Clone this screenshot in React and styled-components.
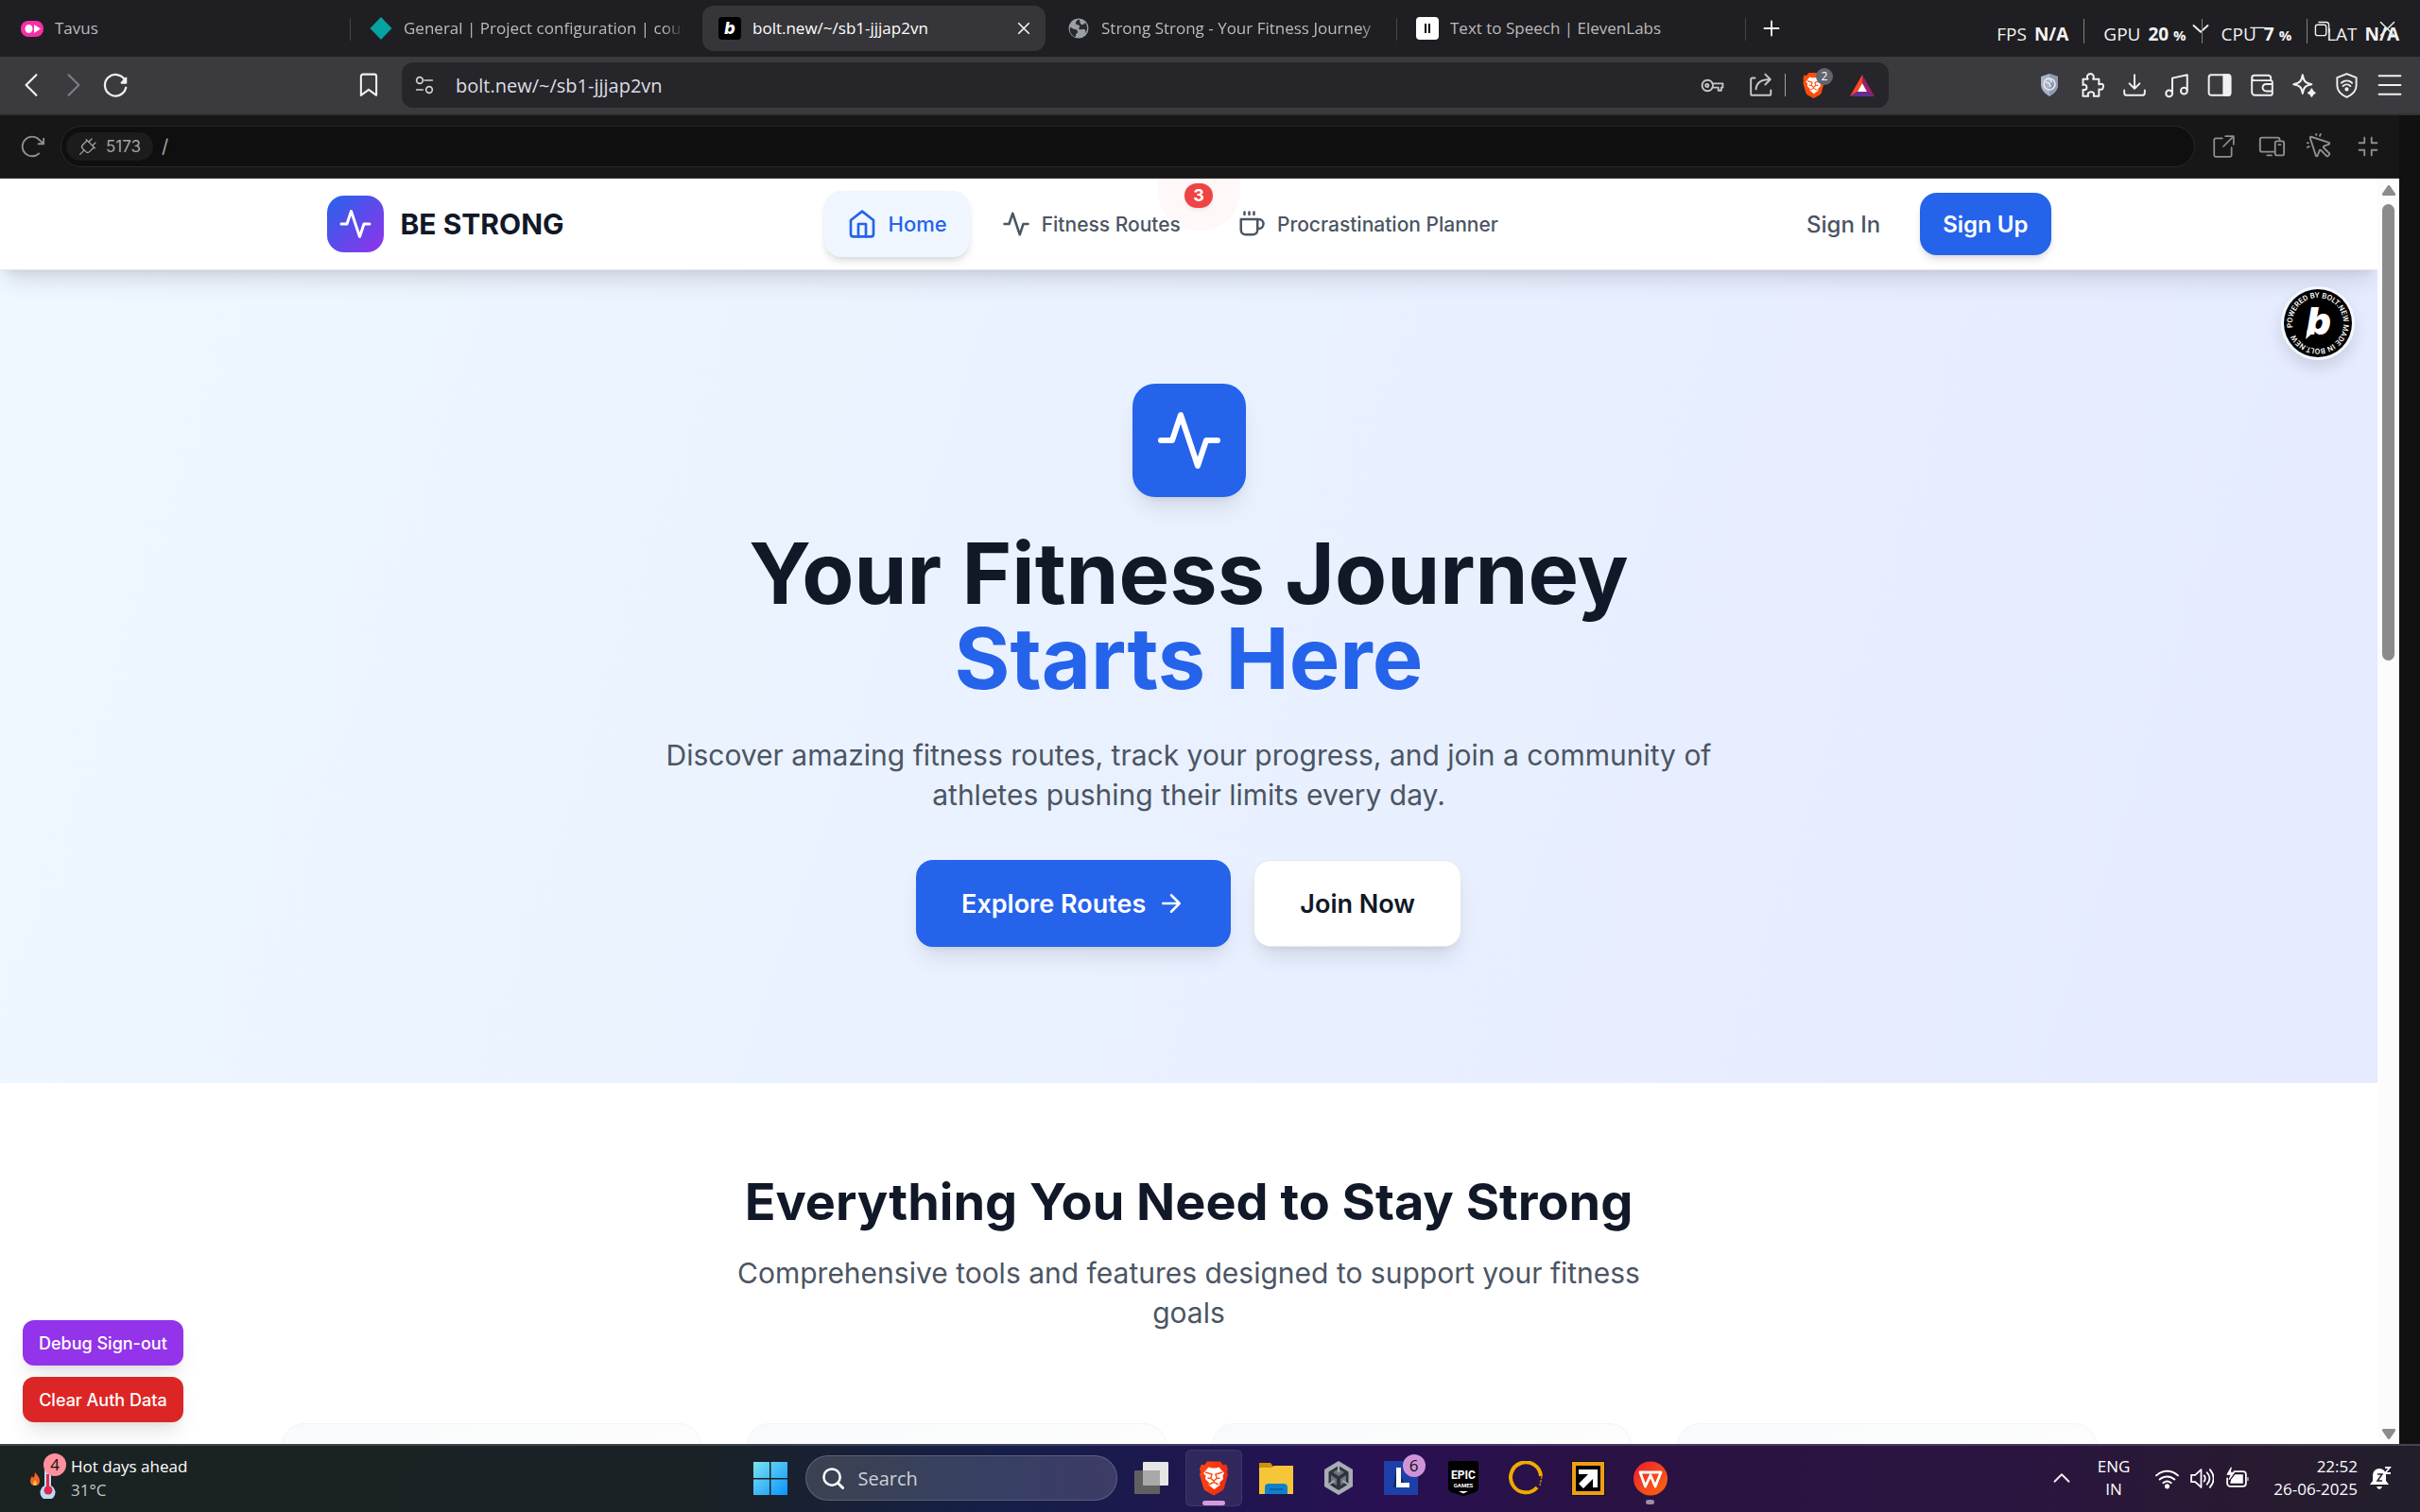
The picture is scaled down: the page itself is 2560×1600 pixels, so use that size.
import React from "react";
import styled, { createGlobalStyle } from "styled-components";
import {
  PiArrowClockwise,
  PiPlug,
  PiDevices,
  PiCursorClick,
  PiCornersIn,
} from "react-icons/pi";

const UI = `"Open Sans", "Noto Sans", sans-serif`;
const INTER = `Inter, "Liberation Sans", sans-serif`;

const Global = createGlobalStyle`
  *, *::before, *::after { box-sizing: border-box; }
  body { margin: 0; background: #111; overflow: hidden; }
  button, input { font: inherit; color: inherit; border: 0; background: none; padding: 0; margin: 0; outline: 0; }
  h1, h2, p { margin: 0; }
  a { color: inherit; text-decoration: none; }
  svg { display: block; flex: none; }
`;

/* ---------- window ---------- */

const Window = styled.div`
  display: flex;
  flex-direction: column;
  height: 100vh;
  font-family: ${UI};
  font-size: 17px;
`;

const TabStrip = styled.header`
  position: relative;
  display: flex;
  align-items: center;
  height: 60px;
  flex: none;
  padding-left: 2px;
  background: #1f1e22;
`;

const Tab = styled.div`
  position: relative;
  display: flex;
  align-items: center;
  gap: 12px;
  flex: 0 1 369px;
  min-width: 0;
  height: 48px;
  padding: 0 14px 0 20px;
  border-radius: 12px;
  color: ${(p) => (p.$active ? "#fff" : "#bbbbbd")};
  &::before {
    content: "";
    position: absolute;
    inset: 0 3px 0 3px;
    border-radius: 12px;
    background: ${(p) => (p.$active ? "#363539" : "transparent")};
  }
  &::after {
    content: "";
    position: absolute;
    right: 0;
    top: 13px;
    height: 24px;
    width: 1px;
    background: ${(p) => (p.$divider ? "#46454a" : "transparent")};
  }
  > * { position: relative; }
`;

const TabTitle = styled.span`
  flex: 1;
  min-width: 0;
  overflow: hidden;
  white-space: nowrap;
  line-height: 24px;
  ${(p) => p.$fade && "mask-image: linear-gradient(90deg, #000 92%, transparent 99%);"}
`;

const PlainButton = styled.button`
  display: grid;
  place-items: center;
  flex: none;
  width: ${(p) => p.$w || 45}px;
  height: ${(p) => p.$h || 45}px;
  color: ${(p) => p.$color || "#f0f0f2"};
`;

const WindowControls = styled.div`
  display: flex;
  margin-left: auto;
`;

const Monitor = styled.div`
  position: absolute;
  top: 20px;
  right: 22px;
  display: flex;
  align-items: center;
  height: 26px;
  font-size: 19px;
  color: #f3f3f3;
`;

const Metric = styled.span`
  display: flex;
  align-items: baseline;
  gap: 8px;
  padding: 4px 0 0 20px;
  margin-right: 16px;
  line-height: 24px;
  border-left: ${(p) => (p.$first ? "0" : "1px solid #808084")};
  height: 26px;
  &:last-child { margin-right: 0; }
  b small { font-size: 15px; }
`;

const Toolbar = styled.div`
  display: flex;
  align-items: center;
  height: 62px;
  flex: none;
  padding: 0 10px;
  background: #3b3a3f;
  border-bottom: 2px solid #313035;
`;

const Gap = styled.span`
  flex: 0 0 ${(p) => p.$w}px;
`;

const AddressBar = styled.div`
  display: flex;
  align-items: center;
  flex: 0 1 1573px;
  height: 48px;
  padding: 0 0 0 14px;
  border-radius: 12px;
  background: #26252a;
  color: #d4d4d8;
`;

const AddressInput = styled.input`
  flex: 1;
  min-width: 0;
  margin-left: 23px;
  font-size: 20px;
  color: #dedee2;
`;

const Divider = styled.i`
  width: 1px;
  height: 24px;
  margin: 0 7px 0 0;
  background: #a0a0a4;
`;

const ShieldButton = styled(PlainButton)`
  position: relative;
`;

const ShieldCount = styled.span`
  position: absolute;
  top: 4px;
  right: 2px;
  width: 18px;
  height: 18px;
  border-radius: 9px;
  background: #616570;
  color: #fff;
  font-size: 12px;
  line-height: 18px;
  text-align: center;
`;

const ToolbarIcons = styled.div`
  display: flex;
  margin-left: auto;
`;

/* ---------- preview bar ---------- */

const Workspace = styled.main`
  display: flex;
  flex-direction: column;
  flex: 1;
  min-height: 0;
  margin-right: 22px;
`;

const PreviewBar = styled.div`
  display: flex;
  align-items: center;
  height: 67px;
  flex: none;
  padding: 0 7px 0 10px;
  background: #171717;
  border-bottom: 1px solid #2b2b2b;
`;

const PathBox = styled.div`
  display: flex;
  align-items: center;
  flex: 1;
  height: 44px;
  margin: 0 5px 0 6px;
  padding: 0 6px 0 5px;
  border: 1px solid #292929;
  border-radius: 22px;
  background: #0f0f0f;
  color: #a3a3a3;
  font-family: ${INTER};
  font-size: 17px;
`;

const Port = styled.button`
  display: flex;
  align-items: center;
  gap: 9px;
  height: 30px;
  padding: 0 13px 0 12px;
  border-radius: 15px;
  background: #1c1c1c;
`;

const PathInput = styled.input`
  flex: 1;
  margin-left: 9px;
  font-size: 20px;
`;

/* ---------- site ---------- */

const Viewport = styled.div`
  display: flex;
  flex: 1;
  min-height: 0;
`;

const Site = styled.div`
  position: relative;
  flex: 1;
  min-width: 0;
  overflow: hidden;
  background: #fff;
  font-family: ${INTER};
  color: #4b5563;
`;

const SiteHeader = styled.header`
  position: relative;
  z-index: 2;
  background: #fff;
  border-bottom: 1px solid #e5e7eb;
  box-shadow: 0 15px 23px -5px rgba(0, 0, 0, 0.12), 0 6px 9px -6px rgba(0, 0, 0, 0.1);
`;

const HeaderInner = styled.div`
  display: flex;
  align-items: center;
  justify-content: space-between;
  max-width: 1920px;
  height: 96px;
  margin: 0 auto;
  padding: 0 48px;
`;

const Brand = styled.a`
  display: flex;
  align-items: center;
  gap: 18px;
  font-size: 30px;
  font-weight: 700;
  line-height: 42px;
  color: #111827;
`;

const BrandMark = styled.span`
  display: grid;
  place-items: center;
  width: 60px;
  height: 60px;
  border-radius: 18px;
  background: linear-gradient(135deg, #2563eb, #9333ea);
  color: #fff;
`;

const Nav = styled.nav`
  display: flex;
  align-items: center;
  gap: 12px;
`;

const NavLink = styled.a`
  position: relative;
  display: flex;
  align-items: center;
  gap: 12px;
  height: ${(p) => (p.$active ? 70 : 66)}px;
  padding: 0 24px;
  margin: ${(p) => (p.$active ? "0 -2px 0 -3px" : "0")};
  border-radius: 18px;
  font-size: ${(p) => (p.$active ? 22 : 21)}px;
  font-weight: 500;
  color: ${(p) => (p.$active ? "#2563eb" : "#4b5563")};
  background: ${(p) => (p.$active ? "#eff6ff" : "transparent")};
  box-shadow: ${(p) =>
    p.$active ? "0 6px 9px -1px rgba(0,0,0,.1), 0 3px 6px -3px rgba(0,0,0,.1)" : "none"};
`;

const Count = styled.span`
  position: absolute;
  top: -10px;
  right: -10px;
  width: 30px;
  height: 26px;
  border-radius: 13px;
  background: #ef4444;
  color: #fff;
  font-size: 18px;
  font-weight: 700;
  line-height: 26px;
  text-align: center;
  box-shadow: 0 2px 4px rgba(0, 0, 0, 0.08);
`;

const Ping = styled.span`
  position: absolute;
  top: -15px;
  right: -39px;
  width: 87px;
  height: 55px;
  border-radius: 0 0 44px 44px / 0 0 40px 40px;
  background: rgba(239, 68, 68, 0.04);
`;

const Account = styled.div`
  display: flex;
  align-items: center;
  gap: 18px;
`;

const AccountButton = styled.button`
  height: 66px;
  padding: 0 24px;
  border-radius: 18px;
  font-size: 24px;
  font-weight: ${(p) => (p.$primary ? 600 : 500)};
  color: ${(p) => (p.$primary ? "#fff" : "#4b5563")};
  background: ${(p) => (p.$primary ? "#2563eb" : "transparent")};
  box-shadow: ${(p) =>
    p.$primary ? "0 6px 9px -1px rgba(0,0,0,.1), 0 3px 6px -3px rgba(0,0,0,.1)" : "none"};
`;

const Hero = styled.section`
  display: flex;
  flex-direction: column;
  align-items: center;
  padding: 120px 48px 144px;
  background: linear-gradient(108deg, #eff7ff, #ebf3ff 30%, #e8efff 62%, #e5eaff);
  text-align: center;
`;

const HeroMark = styled.span`
  display: grid;
  place-items: center;
  width: 120px;
  height: 120px;
  border-radius: 24px;
  background: #2563eb;
  color: #fff;
  box-shadow: 0 15px 23px -5px rgba(0, 0, 0, 0.1), 0 6px 9px -6px rgba(0, 0, 0, 0.1);
`;

const HeroTitle = styled.h1`
  margin-top: 36px;
  font-size: 90px;
  line-height: 90px;
  font-weight: 700;
  color: #111827;
  span { display: block; color: #2563eb; }
`;

const Lead = styled.p`
  max-width: ${(p) => p.$max}px;
  margin: ${(p) => p.$top}px auto 0;
  font-size: 30px;
  line-height: 42px;
`;

const Actions = styled.div`
  display: flex;
  gap: 24px;
  margin-top: 48px;
`;

const Action = styled.button`
  display: flex;
  align-items: center;
  gap: 12px;
  height: 92px;
  padding: 0 48px;
  border: ${(p) => (p.$primary ? "0" : "1px solid #e5e7eb")};
  border-radius: 18px;
  font-size: 27px;
  font-weight: 600;
  color: ${(p) => (p.$primary ? "#fff" : "#111827")};
  background: ${(p) => (p.$primary ? "#2563eb" : "#fff")};
  box-shadow: 0 15px 23px -5px rgba(0, 0, 0, 0.1), 0 6px 9px -6px rgba(0, 0, 0, 0.1);
`;

const Features = styled.section`
  max-width: 1920px;
  margin: 0 auto;
  padding-top: 96px;
  text-align: center;
`;

const FeaturesTitle = styled.h2`
  font-size: 54px;
  line-height: 60px;
  font-weight: 700;
  color: #111827;
`;

const Cards = styled.div`
  display: grid;
  grid-template-columns: repeat(4, 1fr);
  gap: 48px;
  margin-top: 96px;
`;

const Card = styled.article`
  height: 360px;
  border: 1px solid #f3f4f6;
  border-radius: 24px;
  background: linear-gradient(to bottom right, #f9fafb, #fff);
  box-shadow: 0 2px 4px rgba(0, 0, 0, 0.04);
`;

const DebugStack = styled.div`
  position: absolute;
  left: 24px;
  bottom: 23px;
  display: flex;
  flex-direction: column;
  gap: 12px;
`;

const DebugButton = styled.button`
  height: 48px;
  padding: 0 17px;
  border-radius: 12px;
  font-size: 18px;
  font-weight: 500;
  color: #fff;
  background: ${(p) => p.$color};
  box-shadow: 0 15px 23px -5px rgba(0, 0, 0, 0.1), 0 6px 9px -6px rgba(0, 0, 0, 0.1);
`;

const BoltBadge = styled.a`
  position: absolute;
  z-index: 3;
  top: 114px;
  right: 24px;
  border: 3px solid #f4f8ff;
  border-radius: 50%;
  box-shadow: 0 8px 16px rgba(0, 0, 0, 0.12);
`;

const ScrollTrack = styled.div`
  display: flex;
  flex-direction: column;
  align-items: center;
  width: 23px;
  padding: 7px 0 5px;
  background: #fcfcfc;
`;

const ScrollThumb = styled.div`
  width: 13px;
  height: 36.4%;
  margin: 9px 0 auto;
  border-radius: 7px;
  background: #8b8b8b;
`;

/* ---------- taskbar ---------- */

const Taskbar = styled.footer`
  display: grid;
  grid-template-columns: 1fr auto 1fr;
  align-items: center;
  flex: none;
  height: 72px;
  padding-bottom: 2px;
  border-top: 2px solid rgba(255, 255, 255, 0.16);
  background: linear-gradient(90deg, #1b2222 0%, #1a2226 29%, #151f48 41%, #1f1650 50%, #281052 57%, #2a1242 68%, #2a153f 84%, #281a31 93%, #221f2b 100%) border-box;
  color: #fff;
`;

const Weather = styled.button`
  display: flex;
  align-items: center;
  gap: 5px;
  margin-left: 31px;
  text-align: left;
  line-height: 25px;
  small { display: block; font-size: 17px; color: #c4c7c7; }
`;

const WeatherArt = styled.span`
  position: relative;
  width: 39px;
  height: 44px;
`;

const Bubble = styled.span`
  position: absolute;
  top: ${(p) => p.$top}px;
  right: ${(p) => p.$right}px;
  width: 24px;
  height: 24px;
  border-radius: 12px;
  background: ${(p) => p.$color};
  color: #111;
  font-size: 17px;
  line-height: 24px;
  text-align: center;
`;

const Dock = styled.div`
  display: flex;
  align-items: center;
`;

const SearchBox = styled.label`
  display: flex;
  align-items: center;
  gap: 15px;
  width: 330px;
  height: 48px;
  margin: 0 3px 0 4px;
  padding: 0 17px;
  border: 1px solid rgba(255, 255, 255, 0.18);
  border-radius: 24px;
  background: rgba(255, 255, 255, 0.15);
  input { width: 220px; font-size: 20px; }
  input::placeholder { color: #cfd0d4; opacity: 1; }
`;

const DockButton = styled.button`
  position: relative;
  display: grid;
  place-items: center;
  width: 60px;
  height: 60px;
  margin: 0 3px;
  border-radius: 6px;
  border: 1px solid ${(p) => (p.$active ? "rgba(255,255,255,.08)" : "transparent")};
  background: ${(p) => (p.$active ? "rgba(255,255,255,.08)" : "transparent")};
  &::after {
    content: "";
    position: absolute;
    bottom: ${(p) => (p.$active ? 0 : 1)}px;
    width: ${(p) => (p.$active ? 24 : p.$open ? 9 : 0)}px;
    height: 5px;
    border-radius: 3px;
    background: ${(p) => (p.$active ? "#d79bdc" : "#9d8fab")};
  }
`;

const Tray = styled.div`
  display: flex;
  align-items: center;
  justify-content: flex-end;
  padding-right: 30px;
  line-height: 24px;
`;

const TrayText = styled.div`
  margin-right: ${(p) => p.$right}px;
  text-align: ${(p) => p.$align};
`;

const TrayIcons = styled.div`
  display: flex;
  gap: 12px;
  margin-right: 26px;
`;

/* ---------- drawings ---------- */

const Line = ({ size = 24, w = 2, box = 24, children }) => (
  <svg width={size} height={size} viewBox={`0 0 ${box} ${box}`} fill="none" stroke="currentColor" strokeWidth={w} strokeLinecap="round" strokeLinejoin="round" aria-hidden="true">
    {children}
  </svg>
);

const Pulse = ({ size }) => (
  <Line size={size}><polyline points="22 12 18 12 15 21 9 3 6 12 2 12" /></Line>
);

const BoltMark = ({ size }) => (
  <svg width={size} height={size} viewBox="0 0 24 24" aria-hidden="true">
    <rect width="24" height="24" rx="4" fill="#000" />
    <text x="12" y="18" textAnchor="middle" fontFamily="Inter" fontWeight="800" fontStyle="italic" fontSize="18" fill="#fff">b</text>
  </svg>
);

const BraveLion = ({ w, h, from, to, id }) => (
  <svg width={w} height={h} viewBox="0 0 30 36" aria-hidden="true">
    <defs>
      <linearGradient id={id} x1="0" x2="1" y1="0" y2="0.3">
        <stop offset="0" stopColor={from} />
        <stop offset="1" stopColor={to} />
      </linearGradient>
    </defs>
    <path d="M8 0h14l3 4 3-1 2 5-1 3 1 3-4 14q-.6 2-3 3.600L15 36l-8-4.400Q4.600 30 4 28L0 14l1-3-1-3 2-5 3 1z" fill={`url(#${id})`} />
    <path d="M9.500 6l3 1h5l3-1 5.500 6.500-1.500 2.500.5 3.500-4 4 .5 2.500-6 4.500-6-4.500.5-2.500-4-4 .5-3.500L4 12.500z" fill="#fff" />
    <path d="M6 11.500l7 2-1.200 4.500 3.200 2.500 3.200-2.500-1.200-4.500 7-2M10 24.500l5-2.700 5 2.700M8.500 17.500l2.500.6M21.500 17.500l-2.500.6M15 20v2" fill="none" stroke={from} strokeWidth="1.500" />
  </svg>
);

const Globe = () => (
  <svg width="24" height="24" viewBox="0 0 24 24" aria-hidden="true">
    <circle cx="12" cy="12" r="10.500" fill="#9aa0a6" />
    <path d="M3 11c2 0 3 2 5 2s3 1 3 3-2 1-2 3 0 2-1 2C4 19 2 15 3 11zM12 2.500C9 4 8 7 10 8s3 0 3 2-2 2 0 3 5-1 6 1-1 4-1 4c4-3 4-9 1-12-1 2-4 3-5 1s0-3-2-4.500z" fill="#2a2a2e" />
  </svg>
);

const Badge = () => (
  <svg width="72" height="72" viewBox="0 0 72 72" role="img" aria-label="Made in Bolt">
    <defs>
      <path id="ring" d="M36 36m-27 0a27 27 0 1 1 54 0a27 27 0 1 1-54 0" />
    </defs>
    <circle cx="36" cy="36" r="36" fill="#000" />
    <g transform="rotate(-10 36 36)">
      <text fontFamily="Roboto" fontWeight="500" fontSize="8" fill="#fff">
        <textPath href="#ring">POWERED BY BOLT.NEW MADE IN BOLT.NEW</textPath>
      </text>
    </g>
    <text x="37" y="48" textAnchor="middle" fontFamily="Inter" fontWeight="900" fontStyle="italic" fontSize="40" fill="#fff">b</text>
    <path d="M25 42l6 4-8 7z" fill="#fff" />
  </svg>
);

const toolbarIcons = [
  ["VPN shield", <svg key="a" width="24" height="26" viewBox="0 0 24 26"><path d="M12 1l9 3v8c0 6-4 10-9 13-5-3-9-7-9-13V4z" fill="#aab3c5" /><path d="M12 1l9 3v8c0 6-4 10-9 13z" fill="#8f9ab0" /><circle cx="12" cy="12" r="6" fill="none" stroke="#e8ecf4" strokeWidth="1.500" /><path d="M8 10l4 1 1 4M12 7l3 3" stroke="#e8ecf4" strokeWidth="1.500" fill="none" /></svg>],
  ["Extensions", <Line key="b" size={27} w={1.8}><path d="M4 6h4.500C7 2.500 9 1 11 1s4 1.500 2.500 5H19v5c3-1.500 4.500 0 4 2.500S21 16 19 15.500V22h-5c1-3-.5-4-2.500-4S8 19.500 9 22H4v-6c3 .5 3.500-1 3.500-2.500S6 10.500 4 11.500z" /></Line>],
  ["Downloads", <Line key="c" size={26} w={1.8}><path d="M12 2v13M7 10.500l5 5 5-5M2 17v2.500A2.500 2.500 0 0 0 4.500 22h15a2.500 2.500 0 0 0 2.500-2.500V17" /></Line>],
  ["Playlist", <Line key="d" size={27} w={1.8}><path d="M8 19V5l14-3v14" /><circle cx="5" cy="19.500" r="3" /><circle cx="19" cy="17" r="3" /></Line>],
  ["Sidebar", <Line key="e" size={26} w={1.8}><rect x="1.500" y="2" width="21" height="20" rx="2.500" /><path d="M16 2h4.500a2 2 0 0 1 2 2v16a2 2 0 0 1-2 2H16z" fill="currentColor" /></Line>],
  ["Wallet", <Line key="f" size={26} w={1.8}><path d="M20.500 7V5a2.500 2.500 0 0 0-2.500-2.500H4.500a2.500 2.500 0 0 0 0 5H20a2 2 0 0 1 2 2V20a2 2 0 0 1-2 2H5a3 3 0 0 1-3-3V5M22 11h-6a3.500 3.500 0 0 0 0 7h6" /></Line>],
  ["Assistant", <Line key="g" size={27} w={1.8}><path d="M10.500 2c1 6 2.500 7.500 8.500 8.800-6 1.200-7.500 2.700-8.500 8.700-1-6-2.500-7.500-8.500-8.700C8 9.500 9.500 8 10.500 2z" /><path d="M19 15.500c.5 2.500 1 3 3 3.500-2 .5-2.500 1-3 3-.5-2-1-2.500-3-3 2-.5 2.500-1 3-3.500z" fill="currentColor" /></Line>],
  ["VPN", <Line key="h" size={27} w={1.700}><path d="M12 1l9 3.500V12c0 5-3.500 8.500-9 11-5.500-2.500-9-6-9-11V4.500z" /><path d="M7 9.500c3-2.500 7-2.500 10 0M8.500 12.500c2-2 5-2 7 0" /><circle cx="12" cy="15.500" r="1" fill="currentColor" /></Line>],
  ["Menu", <Line key="i" size={26} w={1.900}><path d="M1.500 3h21M1.500 12h21M1.500 21h21" /></Line>],
];

const dockIcons = [
  { name: "Task View", art: <svg width="36" height="36" viewBox="0 0 36 36"><rect y="10" width="27" height="25" rx="1" fill="#606060" /><rect x="9" y="1" width="27" height="25" rx="1" fill="#e6e6e6" /><path d="M9 10h18v16H9z" fill="#a9a9a9" /></svg> },
  { name: "Brave", active: true, art: <BraveLion id="lionDock" w={30} h={37} from="#ff4a12" to="#f02a10" /> },
  { name: "File Explorer", art: <svg width="36" height="36" viewBox="0 0 36 36"><path d="M0 2h12l3 4v6H0z" fill="#d18f0a" /><path d="M0 7h13l3-2h20v30H0z" fill="#f6c638" /><path d="M6 35v-7q0-4 4-4h16q4 0 4 4v7z" fill="#1180cc" /><path d="M11 30h14" stroke="#0a5a9c" strokeWidth="1.500" /></svg> },
  { name: "Unity Hub", art: <svg width="32" height="36" viewBox="0 0 32 36"><path d="M16 0l15 9v18l-15 9-15-9V9z" fill="#a7acb5" /><path d="M16 5l10.500 6.500v13L16 31 5.500 24.500v-13z" fill="#2f343c" /><path d="M16 8l6 4-6 4-6-4zM8 15l6 4v7l-6-4zM24 15l-6 4v7l6-4z" fill="#6f757f" /><path d="M16 5v7M5.500 25l6-4M26.500 25l-6-4" stroke="#a7acb5" strokeWidth="2" /></svg> },
  { name: "L app", count: "6", art: <svg width="36" height="36" viewBox="0 0 36 36"><path d="M0 0h36v36H0z" fill="#1d3fa8" /><path d="M13 8l-3 20 14-1z" fill="#0c2a5c" /><path d="M13 7h5v16h9v5H13z" fill="#fff" /></svg> },
  { name: "Epic Games", art: <svg width="32" height="37" viewBox="0 0 32 37"><path d="M2 0h28q2 0 2 2v28l-3 3-13 4-13-4-3-3V2q0-2 2-2z" fill="#000" /><text x="16" y="19" textAnchor="middle" fontFamily="Roboto" fontWeight="700" fontSize="12" fill="#fff">EPIC</text><text x="16" y="28" textAnchor="middle" fontFamily="Roboto" fontWeight="700" fontSize="6" fill="#fff">GAMES</text><path d="M11 32h10l-5 2.500z" fill="#fff" /></svg> },
  { name: "Ring app", art: <svg width="36" height="36" viewBox="0 0 36 36"><path d="M34 16A16 16 0 1 0 30 28" fill="none" stroke="#f0aa00" strokeWidth="4" /><path d="M35 16l-2 10" stroke="#b87f00" strokeWidth="1.500" strokeDasharray="3 1" /></svg> },
  { name: "Arrow app", art: <svg width="36" height="37" viewBox="0 0 36 37"><path d="M0 0h36v37H0z" fill="#111" /><path d="M3 3h30v31H3z" fill="#000" stroke="#f09c1a" strokeWidth="4" /><path d="M8 9h20v19h-5v-9L13 29l-5-5 10-10H8z" fill="#fff" /></svg> },
  { name: "WPS Office", open: true, art: <svg width="36" height="37" viewBox="0 0 36 37"><defs><linearGradient id="wps" x2="1" y2="1"><stop stopColor="#ea1c2c" /><stop offset="1" stopColor="#fb6b10" /></linearGradient></defs><circle cx="18" cy="18.500" r="18" fill="url(#wps)" /><path d="M17 12H7l5.500 15L18 15l5 12 6-15H19" fill="none" stroke="#fff" strokeWidth="2.800" strokeLinejoin="round" strokeLinecap="round" /></svg> },
];

export default function App() {
  return (
    <Window>
      <Global />
      <TabStrip>
        <Tab $divider>
          <svg width="24" height="24" viewBox="0 0 24 24"><rect y="4" width="24" height="17" rx="8" fill="#f72fa8" /><ellipse cx="8.500" cy="12.500" rx="4" ry="4.500" fill="#fff" /><path d="M14 8l7 4.500-7 4.500z" fill="#fff" /></svg>
          <TabTitle>Tavus</TabTitle>
        </Tab>
        <Tab>
          <svg width="24" height="24" viewBox="0 0 24 24"><path d="M12 0l11.500 12L12 24 .5 12z" fill="#05a3a0" /></svg>
          <TabTitle $fade>General | Project configuration | cour</TabTitle>
        </Tab>
        <Tab $active>
          <BoltMark size={24} />
          <TabTitle>bolt.new/~/sb1-jjjap2vn</TabTitle>
          <PlainButton $w={24} $h={24} aria-label="Close tab"><Line size={14}><path d="M3 3l18 18M21 3L3 21" strokeWidth="3" /></Line></PlainButton>
        </Tab>
        <Tab $divider>
          <Globe />
          <TabTitle $fade>Strong Strong - Your Fitness Journey</TabTitle>
        </Tab>
        <Tab $divider>
          <svg width="24" height="24" viewBox="0 0 24 24"><rect width="24" height="24" rx="4" fill="#fff" /><path d="M9 7h2v10H9zM13 7h2v10h-2z" fill="#000" /></svg>
          <TabTitle>Text to Speech | ElevenLabs</TabTitle>
        </Tab>
        <PlainButton $w={54} aria-label="New tab"><Line size={18}><path d="M12 2v20M2 12h20" strokeWidth="2.500" /></Line></PlainButton>
        <WindowControls>
          <PlainButton $w={50} aria-label="Search tabs"><Line size={18}><path d="M2 8l10 9L22 8" strokeWidth="2.500" /></Line></PlainButton>
          <PlainButton $w={69} aria-label="Minimize"><Line size={16}><path d="M1 11h22" /></Line></PlainButton>
          <PlainButton $w={69} aria-label="Restore"><Line size={17}><rect x="2" y="6" width="16" height="16" rx="3" /><path d="M7 2h11a4 4 0 0 1 4 4v11" /></Line></PlainButton>
          <PlainButton $w={69} aria-label="Close"><Line size={17}><path d="M2 2l20 20M22 2L2 22" /></Line></PlainButton>
        </WindowControls>
        <Monitor>
          <Metric $first>FPS <b>N/A</b></Metric>
          <Metric>GPU <b>20 <small>%</small></b></Metric>
          <Metric>CPU <b>7 <small>%</small></b></Metric>
          <Metric>LAT <b>N/A</b></Metric>
        </Monitor>
      </TabStrip>

      <Toolbar>
        <PlainButton aria-label="Back"><Line size={26}><path d="M17 2L7 12l10 10" /></Line></PlainButton>
        <PlainButton $color="#7d7d82" aria-label="Forward"><Line size={26}><path d="M7 2l10 10L7 22" /></Line></PlainButton>
        <PlainButton aria-label="Reload"><Line size={27}><path d="M21.500 14A10 10 0 1 1 21 8" /><path d="M21.500 5v4.500h-4z" fill="currentColor" /></Line></PlainButton>
        <Gap $w={222} />
        <PlainButton aria-label="Bookmark"><Line size={26} w={1.900}><path d="M4.500 3.500a2 2 0 0 1 2-2h11a2 2 0 0 1 2 2V22L12 16.500 4.500 22z" /></Line></PlainButton>
        <Gap $w={13} />
        <AddressBar>
          <Line size={20}><circle cx="6" cy="6" r="4" /><path d="M12 6h10M2 18h8" /><circle cx="18" cy="18" r="4" /></Line>
          <AddressInput aria-label="Address" defaultValue="bolt.new/~/sb1-jjjap2vn" />
          <PlainButton $w={51} $color="#c6c6ca" aria-label="Passwords"><Line size={25} w={1.800}><circle cx="7" cy="12" r="5.500" /><circle cx="6.500" cy="12" r="1.500" /><path d="M12 10h10.500v4H21v3h-3v-3h-6" /></Line></PlainButton>
          <PlainButton $w={51} $color="#c6c6ca" aria-label="Share"><Line size={26} w={1.800}><path d="M6 5H3.500A1.500 1.500 0 0 0 2 6.500v14A1.500 1.500 0 0 0 3.500 22H20a1.500 1.500 0 0 0 1.500-1.500V17M7 16c.5-6 5-9.500 14-9.500M16 1.500l5 5-5 5" /></Line></PlainButton>
          <Divider />
          <ShieldButton $w={45} aria-label="Brave Shields">
            <BraveLion id="lionBar" w={23} h={27} from="#ff4e0c" to="#ff4e0c" />
            <ShieldCount>2</ShieldCount>
          </ShieldButton>
          <PlainButton $w={57} aria-label="Brave Rewards">
            <svg width="26" height="23" viewBox="0 0 26 23"><path d="M13 0L0 23l8-5 5-9z" fill="#ff4724" /><path d="M13 0l13 23-8-5-5-9z" fill="#9e1f63" /><path d="M0 23h26l-8-5H8z" fill="#662d91" /><path d="M13 9l5 9H8z" fill="#fff" /></svg>
          </PlainButton>
        </AddressBar>
        <ToolbarIcons>
          {toolbarIcons.map(([name, art]) => (
            <PlainButton key={name} aria-label={name}>{art}</PlainButton>
          ))}
        </ToolbarIcons>
      </Toolbar>

      <Workspace>
        <PreviewBar>
          <PlainButton $w={48} $color="#8f8f8f" aria-label="Reload preview"><PiArrowClockwise size={30} /></PlainButton>
          <PathBox>
            <Port><PiPlug size={21} />5173</Port>
            <PathInput aria-label="Preview path" defaultValue="/" />
          </PathBox>
          <PlainButton $w={50} $color="#8f8f8f" aria-label="Open in new tab"><Line size={26} w={1.600}><path d="M11 4H4.500A1.500 1.500 0 0 0 3 5.500v15A1.500 1.500 0 0 0 4.500 22h14a1.500 1.500 0 0 0 1.500-1.500V13M14 2h8v8M22 2L12 12" /></Line></PlainButton>
          <PlainButton $w={51} $color="#8f8f8f" aria-label="Devices"><PiDevices size={30} /></PlainButton>
          <PlainButton $w={51} $color="#8f8f8f" aria-label="Inspect"><PiCursorClick size={30} /></PlainButton>
          <PlainButton $w={52} $color="#8f8f8f" aria-label="Exit full screen"><PiCornersIn size={30} /></PlainButton>
        </PreviewBar>

        <Viewport>
          <Site>
            <SiteHeader>
              <HeaderInner>
                <Brand href="#">
                  <BrandMark><Pulse size={36} /></BrandMark>
                  BE STRONG
                </Brand>
                <Nav>
                  <NavLink href="#" $active>
                    <Line size={32}><path d="M3 9l9-7 9 7v11a2 2 0 0 1-2 2H5a2 2 0 0 1-2-2z" /><polyline points="9 22 9 12 15 12 15 22" /></Line>
                    Home
                  </NavLink>
                  <NavLink href="#">
                    <Pulse size={30} />
                    Fitness Routes
                    <Ping />
                    <Count>3</Count>
                  </NavLink>
                  <NavLink href="#">
                    <Line size={30}><path d="M17 8h1a4 4 0 1 1 0 8h-1M3 8h14v9a4 4 0 0 1-4 4H7a4 4 0 0 1-4-4ZM6 2v2M10 2v2M14 2v2" /></Line>
                    Procrastination Planner
                  </NavLink>
                </Nav>
                <Account>
                  <AccountButton>Sign In</AccountButton>
                  <AccountButton $primary>Sign Up</AccountButton>
                </Account>
              </HeaderInner>
            </SiteHeader>

            <Hero>
              <HeroMark><Pulse size={72} /></HeroMark>
              <HeroTitle>Your Fitness Journey<span>Starts Here</span></HeroTitle>
              <Lead $max={1152} $top={36}>
                Discover amazing fitness routes, track your progress, and join a community of athletes pushing their limits every day.
              </Lead>
              <Actions>
                <Action $primary>Explore Routes<Line size={30}><path d="M5 12h14M12 5l7 7-7 7" /></Line></Action>
                <Action>Join Now</Action>
              </Actions>
            </Hero>

            <Features>
              <FeaturesTitle>Everything You Need to Stay Strong</FeaturesTitle>
              <Lead $max={1008} $top={24}>Comprehensive tools and features designed to support your fitness goals</Lead>
              <Cards>
                <Card /><Card /><Card /><Card />
              </Cards>
            </Features>

            <BoltBadge href="#"><Badge /></BoltBadge>
            <DebugStack>
              <DebugButton $color="#9333ea">Debug Sign-out</DebugButton>
              <DebugButton $color="#dc2626">Clear Auth Data</DebugButton>
            </DebugStack>
          </Site>
          <ScrollTrack>
            <svg width="16" height="11" viewBox="0 0 16 11"><path d="M8 0q1 0 1.500 1L15 9q.5 2-1 2H2q-1.500 0-1-2l5.500-8Q7 0 8 0z" fill="#8b8b8b" /></svg>
            <ScrollThumb />
            <svg width="16" height="11" viewBox="0 0 16 11"><path d="M8 11q1 0 1.500-1L15 2q.5-2-1-2H2Q.5 0 1 2l5.500 8q.5 1 1.500 1z" fill="#8b8b8b" /></svg>
          </ScrollTrack>
        </Viewport>
      </Workspace>

      <Taskbar>
        <Weather>
          <WeatherArt>
            <svg width="30" height="44" viewBox="0 0 30 44"><path d="M6 16q5 5 5 9 0 5-5 5t-5-5q0-3 2-5l1 2q2-2 2-6z" fill="#f4642a" /><path d="M6 24q2 2 2 4t-2 2-2-2 2-4z" fill="#ffc23a" /><path d="M16 12h7v18a8 8 0 1 1-7 0z" fill="#b9dcf5" /><circle cx="20" cy="35" r="4.500" fill="#e2264d" /><path d="M18 18h3v17h-3z" fill="#e2264d" /></svg>
            <Bubble $top={-4} $right={0} $color="#ff919c">4</Bubble>
          </WeatherArt>
          <span>Hot days ahead<small>31°C</small></span>
        </Weather>
        <Dock>
          <DockButton aria-label="Start">
            <svg width="36" height="36" viewBox="0 0 36 36"><defs><linearGradient id="win" gradientUnits="userSpaceOnUse" x2="36" y2="36"><stop stopColor="#7ce5f0" /><stop offset="1" stopColor="#0a94fb" /></linearGradient></defs><path d="M0 1h17v17H0zM18.500 1H36v17H18.500zM0 19.500h17V36H0zM18.500 19.500H36V36H18.500z" fill="url(#win)" /></svg>
          </DockButton>
          <SearchBox>
            <Line size={23} w={2.600}><circle cx="10.500" cy="10.500" r="9" /><path d="M17 17l5.500 5.500" strokeWidth="3" /></Line>
            <input aria-label="Search" placeholder="Search" />
          </SearchBox>
          {dockIcons.map((d) => (
            <DockButton key={d.name} aria-label={d.name} $active={d.active} $open={d.open}>
              {d.art}
              {d.count && <Bubble $top={4} $right={3} $color="#cf94d8">{d.count}</Bubble>}
            </DockButton>
          ))}
        </Dock>
        <Tray>
          <PlainButton $w={16} aria-label="Show hidden icons"><Line size={18}><path d="M2 17l10-10 10 10" strokeWidth="2.500" /></Line></PlainButton>
          <Gap $w={31} />
          <TrayText $right={27} $align="center">ENG<br />IN</TrayText>
          <TrayIcons>
            <Line size={25} w={1.900}><path d="M1 9c6.500-6 15.500-6 22 0M4.500 13c4.500-4 10.500-4 15 0M8 16.500c2.500-2 5.500-2 8 0" /><circle cx="12" cy="20" r="1.500" fill="currentColor" /></Line>
            <Line size={25} w={1.700}><path d="M1 8.500h4L11 3v18l-6-5.500H1zM14 9c1.500 2 1.500 4 0 6M17 6c3.500 4 3.500 8 0 12M20 3c5 6 5 12 0 18" /></Line>
            <Line size={25} w={1.700}><path d="M9 5h9a3 3 0 0 1 3 3v9a3 3 0 0 1-3 3H5a3 3 0 0 1-3-3v-5" /><path d="M10 8h8v9H5l1-4z" fill="currentColor" strokeWidth="0" /><path d="M23 11v3M6 1L2 8h4l-2 5 5-7H5z" fill="currentColor" strokeWidth="1" /></Line>
          </TrayIcons>
          <TrayText $right={13} $align="right">22:52<br />26-06-2025</TrayText>
          <svg width="23" height="26" viewBox="0 0 23 26"><path d="M10 3a7 7 0 0 1 7 7v6l3 4H0l3-4v-6a7 7 0 0 1 7-7zM7 22h6q-1 3-3 3t-3-3z" fill="#fff" /><path d="M8 9h5l-5 7h5" fill="none" stroke="#281a31" strokeWidth="1.500" /><path d="M16 2h5l-5 6h6" fill="none" stroke="#fff" strokeWidth="1.800" /></svg>
        </Tray>
      </Taskbar>
    </Window>
  );
}
